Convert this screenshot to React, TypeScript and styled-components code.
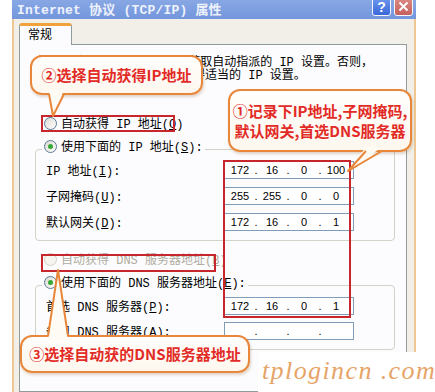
import React from 'react';
import styled, { createGlobalStyle } from 'styled-components';

const GlobalStyle = createGlobalStyle`
  html, body {
    margin: 0;
    padding: 0;
    background: #fff;
  }
  body {
    font-family: "Liberation Mono", "Noto Sans CJK SC", monospace;
  }
`;

const Page = styled.div`
  position: relative;
  width: 435px;
  height: 392px;
  overflow: hidden;
  background: #fff;
`;

const Window = styled.div`
  margin-left: 12px;
  width: 404px;
  height: 100%;
  display: flex;
  flex-direction: column;
`;

const TitleBar = styled.div`
  height: 19px;
  flex-shrink: 0;
  display: flex;
  align-items: center;
  padding: 0 3px 0 5px;
  background: linear-gradient(#88a7e4, #7396dc);
`;

const Title = styled.div`
  flex: 1;
  font-size: 13px;
  font-weight: bold;
  letter-spacing: 0.2px;
  color: #eef2fc;
  white-space: pre;
  margin-top: -2px;
`;

const TitleButton = styled.div<{ $kind: 'help' | 'close' }>`
  align-self: flex-end;
  margin: 0 0 3px 3px;
  width: 19px;
  height: 19px;
  box-sizing: border-box;
  border: 1px solid #f4f6fc;
  border-radius: 3px;
  display: flex;
  align-items: center;
  justify-content: center;
  color: #fff;
  font: bold 14px "Liberation Sans", sans-serif;
  background: ${({ $kind }) =>
    $kind === 'help'
      ? 'linear-gradient(#6e98ee, #3a68d8)'
      : 'linear-gradient(#dc8c86, #c4605c)'};
`;

const Body = styled.div`
  flex: 1;
  display: flex;
  flex-direction: column;
  padding: 4px 7px 0 5px;
  background: #f1efe7;
  border-left: 2px solid #f0c792;
  border-right: 2px solid #f0c792;
`;

const Tab = styled.div`
  position: relative;
  z-index: 1;
  width: 53px;
  height: 22px;
  box-sizing: border-box;
  margin-bottom: -1px;
  padding: 3px 0 0 8px;
  border: 1px solid #919b9c;
  border-top: 3px solid #f2a23c;
  border-bottom: none;
  border-radius: 3px 3px 0 0;
  background: #fcfcfe;
  font-size: 12px;
  line-height: 14px;
  color: #000;
`;

const Panel = styled.div`
  flex: 1;
  display: flex;
  flex-direction: column;
  padding: 0 11px 0 15px;
  border: 1px solid #919b9c;
  background: #fcfcfe;
`;

const Intro = styled.div`
  margin-top: 12px;
  padding-left: 2px;
  font-size: 12px;
  line-height: 13px;
  white-space: pre;
  color: #000;
`;

const RadioRow = styled.div<{ $disabled?: boolean; $top?: number }>`
  display: flex;
  align-items: center;
  gap: 4px;
  height: 16px;
  margin: ${({ $top }) => $top ?? 0}px 0 0 9px;
  font-size: 12px;
  white-space: pre;
  color: ${({ $disabled }) => ($disabled ? '#b0ad9f' : '#000')};
`;

const LegendRow = styled(RadioRow)`
  margin: 0;
`;

const RadioMark = styled.span<{ $checked?: boolean; $disabled?: boolean }>`
  position: relative;
  width: 11px;
  height: 11px;
  flex-shrink: 0;
  border-radius: 50%;
  border: 1px solid ${({ $disabled }) => ($disabled ? '#d2d0c4' : '#5a7a98')};
  background: ${({ $disabled }) =>
    $disabled ? '#f6f5f0' : 'linear-gradient(135deg, #dcdad0, #ffffff)'};

  &::after {
    content: '';
    display: ${({ $checked }) => ($checked ? 'block' : 'none')};
    position: absolute;
    left: 3px;
    top: 3px;
    width: 5px;
    height: 5px;
    border-radius: 50%;
    background: #36a836;
  }
`;

const Group = styled.fieldset<{ $top: number }>`
  margin: ${({ $top }) => $top}px 0 0 0;
  padding: 1px 10px 9px 6px;
  min-width: 0;
  border: 1px solid #d3d2c6;
  border-radius: 4px;
`;

const GroupLegend = styled.legend`
  padding: 0 2px 6px 2px;
`;

const Fields = styled.div<{ $gap: number }>`
  display: flex;
  flex-direction: column;
  gap: ${({ $gap }) => $gap}px;
`;

const FieldRow = styled.div`
  display: grid;
  grid-template-columns: 182px 126px;
  align-items: center;
  padding-left: 4px;
  font-size: 12px;
  white-space: pre;
  color: #000;
`;

const IpBox = styled.div`
  height: 18px;
  box-sizing: border-box;
  margin-left: -4px;
  padding-left: 3px;
  display: flex;
  align-items: center;
  border: 1px solid #7f9db9;
  background: #fff;
  font: 11px "Liberation Sans", sans-serif;
  color: #000;
`;

const IpNum = styled.span`
  width: 24px;
  text-align: center;
`;

const IpDot = styled.span`
  width: 8px;
  text-align: center;
`;

const Highlight = styled.div<{ $x: number; $y: number; $w: number; $h: number }>`
  position: absolute;
  left: ${({ $x }) => $x}px;
  top: ${({ $y }) => $y}px;
  width: ${({ $w }) => $w}px;
  height: ${({ $h }) => $h}px;
  box-sizing: border-box;
  border: 2px solid #c8262d;
  pointer-events: none;
`;

const Bubble = styled.div<{ $x: number; $y: number; $w: number; $h: number }>`
  position: absolute;
  left: ${({ $x }) => $x}px;
  top: ${({ $y }) => $y}px;
  width: ${({ $w }) => $w}px;
  height: ${({ $h }) => $h}px;
  box-sizing: border-box;
  border: 2px solid #e8873a;
  border-radius: 12px;
  background: linear-gradient(#fffefc, #fdf7ee);
  box-shadow: 1px 2px 3px rgba(140, 90, 40, 0.25);
  display: flex;
  flex-direction: column;
  align-items: center;
  justify-content: center;
  font-family: "Noto Sans CJK SC", sans-serif;
  font-weight: 700;
  font-size: 15px;
  line-height: 20px;
  color: #e22b26;
  white-space: nowrap;
`;

const TailSvg = styled.svg<{ $x: number; $y: number }>`
  position: absolute;
  left: ${({ $x }) => $x}px;
  top: ${({ $y }) => $y}px;
  overflow: visible;
`;

const Watermark = styled.div`
  position: absolute;
  left: 258px;
  top: 352px;
  width: 177px;
  height: 40px;
  box-sizing: border-box;
  padding: 0 0 2px 4px;
  display: flex;
  align-items: center;
  background: #fff;
  font-family: "Liberation Serif", serif;
  font-style: italic;
  font-size: 26px;
  letter-spacing: 1.4px;
  color: #e6a468;
  white-space: pre;
`;

type Pt = [number, number];

// tail of a callout: two base points on the bubble edge and a tip; dy points into the bubble
const Tail = ({ a, b, tip, dy }: { a: Pt; b: Pt; tip: Pt; dy: number }) => {
  const xs = [a[0], b[0], tip[0]];
  const ys = [a[1] + dy, b[1] + dy, tip[1], a[1]];
  const x0 = Math.min(...xs) - 2;
  const y0 = Math.min(...ys) - 2;
  const w = Math.max(...xs) - x0 + 2;
  const h = Math.max(...ys) - y0 + 2;
  const p = (q: Pt, d = 0) => `${q[0] - x0},${q[1] + d - y0}`;
  return (
    <TailSvg $x={x0} $y={y0} width={w} height={h}>
      <polygon points={`${p(a, dy)} ${p(tip)} ${p(b, dy)}`} fill="#fefbf5" />
      <polyline
        points={`${p(a)} ${p(tip)} ${p(b)}`}
        fill="none"
        stroke="#e8873a"
        strokeWidth={2}
        strokeLinejoin="round"
      />
    </TailSvg>
  );
};

const Radio = ({
  label,
  checked,
  disabled,
}: {
  label: React.ReactNode;
  checked?: boolean;
  disabled?: boolean;
}) => (
  <>
    <RadioMark $checked={checked} $disabled={disabled} />
    <span>{label}</span>
  </>
);

const IpField = ({ parts }: { parts: string[] }) => (
  <IpBox>
    {[0, 1, 2, 3].map((i) => (
      <React.Fragment key={i}>
        <IpNum>{parts[i] ?? ''}</IpNum>
        {i < 3 && <IpDot>.</IpDot>}
      </React.Fragment>
    ))}
  </IpBox>
);

const App: React.FC = () => {
  return (
    <Page>
      <GlobalStyle />
      <Window>
        <TitleBar>
          <Title>Internet 协议 (TCP/IP) 属性</Title>
          <TitleButton $kind="help">?</TitleButton>
          <TitleButton $kind="close">
            <svg width="11" height="11" viewBox="0 0 11 11">
              <path d="M1.5 1.5 L9.5 9.5 M9.5 1.5 L1.5 9.5" stroke="#fff" strokeWidth="2" />
            </svg>
          </TitleButton>
        </TitleBar>
        <Body>
          <Tab>常规</Tab>
          <Panel>
            <Intro>
              {'如果网络支持此功能,则可以获取自动指派的 IP 设置。否则，\n您需要从网络系统管理员处获得适当的 IP 设置。'}
            </Intro>

            <RadioRow $top={32}>
              <Radio label={<>自动获得 IP 地址(<u>O</u>)</>} />
            </RadioRow>

            <Group $top={7}>
              <GroupLegend>
                <LegendRow>
                  <Radio checked label={<>使用下面的 IP 地址(<u>S</u>):</>} />
                </LegendRow>
              </GroupLegend>
              <Fields $gap={8}>
                <FieldRow>
                  <span>IP 地址(<u>I</u>):</span>
                  <IpField parts={['172', '16', '0', '100']} />
                </FieldRow>
                <FieldRow>
                  <span>子网掩码(<u>U</u>):</span>
                  <IpField parts={['255', '255', '0', '0']} />
                </FieldRow>
                <FieldRow>
                  <span>默认网关(<u>D</u>):</span>
                  <IpField parts={['172', '16', '0', '1']} />
                </FieldRow>
              </Fields>
            </Group>

            <RadioRow $top={10} $disabled>
              <Radio disabled label={<>自动获得 DNS 服务器地址(<u>B</u>)</>} />
            </RadioRow>

            <Group $top={7}>
              <GroupLegend>
                <LegendRow>
                  <Radio checked label={<>使用下面的 DNS 服务器地址(<u>E</u>):</>} />
                </LegendRow>
              </GroupLegend>
              <Fields $gap={7}>
                <FieldRow>
                  <span>首选 DNS 服务器(<u>P</u>):</span>
                  <IpField parts={['172', '16', '0', '1']} />
                </FieldRow>
                <FieldRow>
                  <span>备用 DNS 服务器(<u>A</u>):</span>
                  <IpField parts={[]} />
                </FieldRow>
              </Fields>
            </Group>
          </Panel>
        </Body>
      </Window>

      <Highlight $x={41} $y={115} $w={134} $h={17} />
      <Highlight $x={223} $y={160} $w={128} $h={158} />
      <Highlight $x={41} $y={254} $w={175} $h={18} />

      <Bubble $x={30} $y={55} $w={173} $h={40}>
        ②选择自动获得IP地址
      </Bubble>
      <Tail a={[49, 94]} b={[64, 94]} tip={[53, 116]} dy={-4} />

      <Bubble $x={228} $y={89} $w={184} $h={63}>
        <div>①记录下IP地址,子网掩码,</div>
        <div>默认网关,首选DNS服务器</div>
      </Bubble>
      <Tail a={[366, 151]} b={[382, 151]} tip={[348, 171]} dy={-4} />

      <Bubble $x={20} $y={335} $w={230} $h={38}>
        ③选择自动获的DNS服务器地址
      </Bubble>
      <Tail a={[48, 336]} b={[68, 336]} tip={[58, 270]} dy={4} />

      <Watermark>tplogincn .com</Watermark>
    </Page>
  );
};

export default App;
